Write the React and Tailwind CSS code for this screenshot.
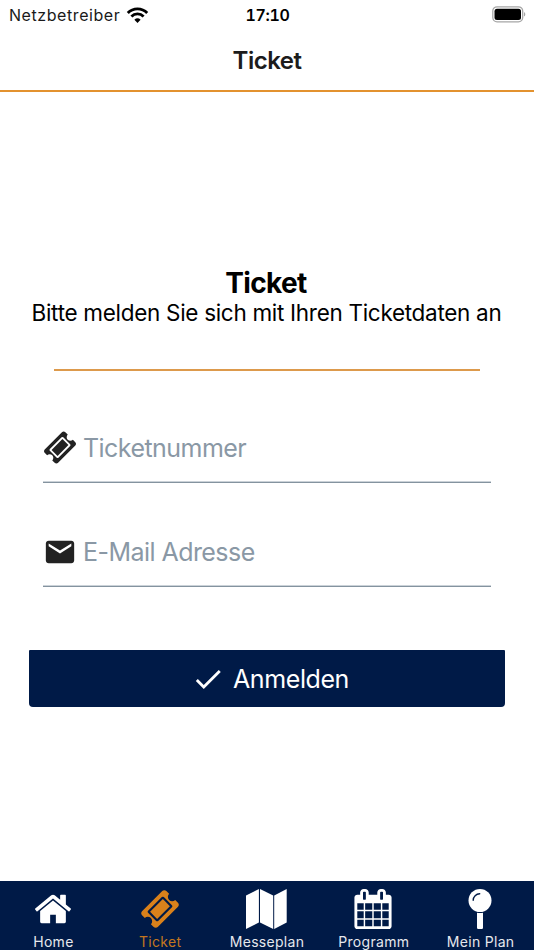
import { MdCheck, MdEmail } from "react-icons/md";

const App = () => {
  return (
    <div className="flex h-[950px] w-[534px] flex-col overflow-hidden bg-white font-['Inter','Liberation_Sans',sans-serif] text-black">
      <StatusBar />

      {/* ===== HEADER ===== */}
      <header className="flex h-[62px] shrink-0 items-center justify-center border-b-2 border-[#e3922f] pt-[1px]">
        <h1 className="text-[24px] leading-none font-semibold tracking-[-0.5px] text-[#1c1c1c]">
          Ticket
        </h1>
      </header>

      {/* ===== LOGIN ===== */}
      <main className="flex flex-1 flex-col px-[29px] pt-[174px]">
        <h2 className="pr-[2px] text-center text-[28px] leading-[34px] font-bold tracking-[-0.65px]">
          Ticket
        </h2>
        <p className="-mt-[1px] pr-[1px] text-center text-[22.5px] leading-[28px] tracking-[-0.3px] whitespace-nowrap">
          Bitte melden Sie sich mit Ihren Ticketdaten an
        </p>
        <hr className="mx-[25px] mt-[42px] border-t-2 border-[#dd9a4c]" />

        <form className="flex flex-col" onSubmit={(e) => e.preventDefault()}>
          <Field
            className="mt-[39px]"
            icon={<TicketIcon className="size-[35px]" />}
            type="text"
            placeholder="Ticketnummer"
          />
          <Field
            className="mt-[31px]"
            icon={<MdEmail className="size-[34px]" />}
            type="email"
            placeholder="E-Mail Adresse"
          />
          <button
            type="submit"
            className="mt-[63px] flex h-[57px] items-center justify-center rounded-b-[4px] rounded-t-[1px] bg-[#001a47] pl-[6px] text-[25px] text-white"
          >
            <MdCheck className="mr-[8px] size-[34px]" />
            <span className="pt-[2px] tracking-[-0.4px]">Anmelden</span>
          </button>
        </form>
      </main>

      {/* ===== TABS ===== */}
      <nav className="grid h-[69px] shrink-0 grid-cols-5 bg-[#001a47] text-white">
        <Tab icon={<HomeIcon />} label="Home" />
        <Tab icon={<TicketIcon className="size-[40px]" />} label="Ticket" active />
        <Tab icon={<MapIcon />} label="Messeplan" />
        <Tab icon={<CalendarIcon />} label="Programm" />
        <Tab icon={<PinIcon />} label="Mein Plan" />
      </nav>
    </div>
  );
};

export default App;

/* ===== STATUS BAR ===== */
const StatusBar = () => {
  return (
    <div className="grid h-[30px] shrink-0 grid-cols-3 items-center pr-[8px] pl-[9px] text-[16px] leading-none">
      <div className="flex items-center gap-[6px]">
        <span className="tracking-[0.57px] text-[#1a1a1a]">Netzbetreiber</span>
        <svg className="-mt-[1px]" width="23" height="16" viewBox="0 0 22 16" fill="none">
          <path d="M1.300 5.900a13.600 13.600 0 0 1 19.400 0" stroke="currentColor" strokeWidth="2.900" />
          <path d="M4.900 9.500a8.600 8.600 0 0 1 12.200 0" stroke="currentColor" strokeWidth="2.800" />
          <path d="M11 15.900 7.900 12.700a4.500 4.500 0 0 1 6.200 0z" fill="currentColor" />
        </svg>
      </div>
      <span className="text-center font-semibold tabular-nums tracking-[-0.3px]">17:10</span>
      <svg className="-mt-[1px] justify-self-end" width="34" height="17" viewBox="0 0 34 17">
        <rect x="0.800" y="0.800" width="29.900" height="15" rx="4.300" fill="none" stroke="#a6a6a6" strokeWidth="1.300" />
        <rect x="2.500" y="2.700" width="26.500" height="11.300" rx="2.500" fill="#000" />
        <path d="M32 6v4.600c1.800-.8 1.800-3.800 0-4.600z" fill="#a6a6a6" />
      </svg>
    </div>
  );
};

/* ===== FIELD ===== */
const Field = ({ icon, type, placeholder, className }) => {
  return (
    <label
      className={`mx-[14px] flex h-[73px] items-center border-b border-[#84939f] pt-[3px] text-[#222] shadow-[inset_0_-1px_0_#cbd2d8] ${className}`}
    >
      <span className="flex w-[34px] shrink-0 justify-center">{icon}</span>
      <input
        type={type}
        placeholder={placeholder}
        className="ml-[6px] min-w-0 flex-1 bg-transparent pt-[2px] text-[25px] tracking-[-0.55px] outline-none placeholder:text-[#8a98a5]"
      />
    </label>
  );
};

/* ===== TAB ===== */
const Tab = ({ icon, label, active }) => {
  return (
    <a
      className={`flex flex-col items-center pt-[8px] ${
        active ? "text-[#d9811b]" : "text-white"
      }`}
    >
      <span className="flex h-[40px] items-center justify-center">{icon}</span>
      <span className="mt-[5px] text-[14px] leading-[16px] tracking-[0.3px] whitespace-nowrap opacity-90">
        {label}
      </span>
    </a>
  );
};

/* ===== ICONS ===== */
const TicketIcon = ({ className }) => (
  <svg className={className} viewBox="0 0 1792 1792" fill="currentColor">
    <path d="M1024 452l316 316-572 572-316-316zm-211 979l618-618q19-19 19-45t-19-45l-362-362q-18-18-45-18t-45 18l-618 618q-19 19-19 45t19 45l362 362q18 18 45 18t45-18zm889-637l-907 908q-37 37-90.500 37t-90.500-37l-126-126q56-56 56-136t-56-136-136-56-136 56l-125-126q-37-37-37-90.500t37-90.500l907-906q37-37 90.500-37t90.500 37l125 125q-56 56-56 136t56 136 136 56 136-56l126 125q37 37 37 90.500t-37 90.500z" />
  </svg>
);

const HomeIcon = () => (
  <svg className="size-[40px]" viewBox="0 0 1792 1792" fill="currentColor">
    <path d="M1472 992v480q0 26-19 45t-45 19h-384v-384h-256v384h-384q-26 0-45-19t-19-45v-480q0-1 .5-3t.5-3l575-474 575 474q1 2 1 6zm223-69l-62 74q-8 9-21 11h-3q-13 0-21-7l-692-577-692 577q-12 8-24 7-13-2-21-11l-62-74q-8-10-7-23.500t11-21.500l719-599q32-26 76-26t76 26l244 204v-195q0-14 9-23t23-9h192q14 0 23 9t9 23v408l219 182q10 8 11 21.500t-9.500 23.500z" />
  </svg>
);

const MapIcon = () => (
  <svg width="41" height="40" viewBox="0 0 41 40" fill="currentColor">
    <path d="M0 6.500 12.900 0v33.400L0 40zM14 0l13.200 6.500V40L14 33.400zM28.200 6.500 40.700 0v33.400L28.200 40z" />
  </svg>
);

const CalendarIcon = () => (
  <svg className="mr-[2px] size-[40px]" viewBox="0 0 1792 1792" fill="currentColor">
    <path d="M192 1664h288v-288h-288v288zm352 0h320v-288h-320v288zm-352-352h288v-320h-288v320zm352 0h320v-320h-320v320zm-352-384h288v-288h-288v288zm736 736h320v-288h-320v288zm-384-736h320v-288h-320v288zm768 736h288v-288h-288v288zm-384-352h320v-320h-320v320zm-352-864v-288q0-13-9.500-22.500t-22.500-9.500h-64q-13 0-22.500 9.500t-9.500 22.500v288q0 13 9.500 22.500t22.500 9.500h64q13 0 22.500-9.500t9.500-22.500zm736 864h288v-320h-288v320zm-384-384h320v-288h-320v288zm384 0h288v-288h-288v288zm32-480v-288q0-13-9.500-22.500t-22.500-9.500h-64q-13 0-22.500 9.500t-9.500 22.500v288q0 13 9.500 22.500t22.500 9.500h64q13 0 22.500-9.500t9.500-22.500zm384-64v1280q0 52-38 90t-90 38h-1408q-52 0-90-38t-38-90v-1280q0-52 38-90t90-38h128v-96q0-66 47-113t113-47h64q66 0 113 47t47 113v96h384v-96q0-66 47-113t113-47h64q66 0 113 47t47 113v96h128q52 0 90 38t38 90z" />
  </svg>
);

const PinIcon = () => (
  <svg className="mr-[2px]" width="24" height="40" viewBox="0 0 24 40">
    <circle cx="12" cy="11.500" r="11.500" fill="currentColor" />
    <path d="M5.200 11.300a6.600 6.600 0 0 1 6.500-6.500" fill="none" stroke="#001a47" strokeWidth="1.400" strokeLinecap="round" />
    <path d="M9 23.700q3 .7 6 0V38.800q0 1.200-1.200 1.200h-3.600Q9 40 9 38.800z" fill="currentColor" />
  </svg>
);
